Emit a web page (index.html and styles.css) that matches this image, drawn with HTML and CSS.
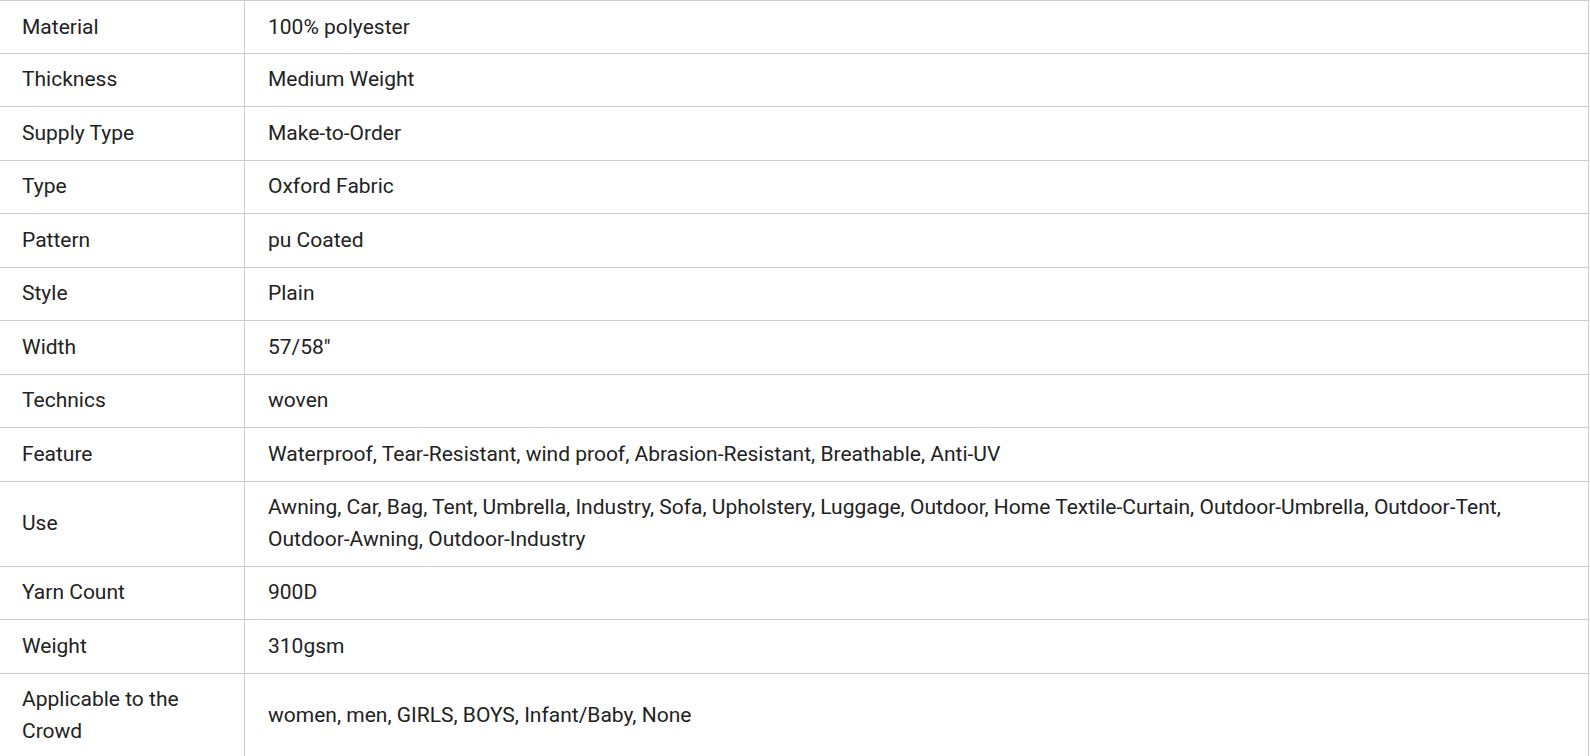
FILE: index.html
```html
<!DOCTYPE html>
<html lang="en">
<head>
<meta charset="UTF-8">
<meta name="viewport" content="width=device-width, initial-scale=1.0">
<title>Product Attributes</title>
<link rel="stylesheet" href="styles.css">
</head>
<body>

<table class="attrs">
    <tr><td class="key">Material</td><td class="val">100% polyester</td></tr>
    <tr><td class="key">Thickness</td><td class="val">Medium Weight</td></tr>
    <tr><td class="key">Supply Type</td><td class="val">Make-to-Order</td></tr>
    <tr><td class="key">Type</td><td class="val">Oxford Fabric</td></tr>
    <tr><td class="key">Pattern</td><td class="val">pu Coated</td></tr>
    <tr><td class="key">Style</td><td class="val">Plain</td></tr>
    <tr><td class="key">Width</td><td class="val">57/58"</td></tr>
    <tr><td class="key">Technics</td><td class="val">woven</td></tr>
    <tr><td class="key">Feature</td><td class="val">Waterproof, Tear-Resistant, wind proof, Abrasion-Resistant, Breathable, Anti-UV</td></tr>
    <tr><td class="key">Use</td><td class="val">Awning, Car, Bag, Tent, Umbrella, Industry, Sofa, Upholstery, Luggage, Outdoor, Home Textile-Curtain, Outdoor-Umbrella, Outdoor-Tent, Outdoor-Awning, Outdoor-Industry</td></tr>
    <tr><td class="key">Yarn Count</td><td class="val">900D</td></tr>
    <tr><td class="key">Weight</td><td class="val">310gsm</td></tr>
    <tr><td class="key">Applicable to the Crowd</td><td class="val">women, men, GIRLS, BOYS, Infant/Baby, None</td></tr>
</table>

</body>
</html>
```

FILE: styles.css
```css
/* Page */
body {
    margin: 0;
    background-color: #ffffff;
    color: #222222;
    font-family: Roboto, "Liberation Sans", sans-serif;
}

/* Attribute table */
.attrs {
    width: 1589px;
    border-collapse: collapse;
    font-size: 21px;
    line-height: 31.5px;
}

.attrs td {
    border: 1px solid #cccccc;
    padding: 10.5px 21px;
    vertical-align: middle;
    text-align: left;
}

/* First row is a pixel shorter */
.attrs tr:first-child td {
    padding-bottom: 9.5px;
}

/* Left column with the attribute names */
.attrs td.key {
    width: 202px;
    padding-left: 22px;
    padding-right: 20px;
    border-left: none;
}

/* Right column with the values */
.attrs td.val {
    padding-left: 23px;
}
```
